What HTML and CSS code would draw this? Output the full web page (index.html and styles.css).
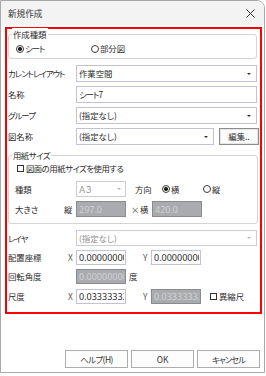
FILE: index.html
```html
<!DOCTYPE html>
<html lang="ja">
<head>
<meta charset="utf-8">
<link rel="stylesheet" href="styles.css">
</head>
<body>
<div class="window">
  <div class="titlebar">
    <span class="title">新規作成</span>
    <svg class="close" width="9" height="9" viewBox="0 0 9 9"><path d="M0.5 0.5L8.5 8.5M8.5 0.5L0.5 8.5" stroke="#333" stroke-width="1" fill="none"/></svg>
  </div>
  <div class="frame">
    <div class="group g1">
      <span class="legend">作成種類</span>
      <div class="radios">
        <span class="radio on r-sheet"><span class="kana">シート</span></span>
        <span class="radio">部分図</span>
      </div>
    </div>

    <div class="row r1">
      <span class="lbl kana">カレントレイアウト</span>
      <div class="field wide"><span class="val">作業空間</span><i class="arrow"></i></div>
    </div>
    <div class="row">
      <span class="lbl">名称</span>
      <div class="field wide"><span class="val kana">シート7</span></div>
    </div>
    <div class="row">
      <span class="lbl kana">グループ</span>
      <div class="field wide"><span class="val">(指定なし)</span><i class="arrow"></i></div>
    </div>
    <div class="row">
      <span class="lbl">図名称</span>
      <div class="field mid"><span class="val">(指定なし)</span><i class="arrow"></i></div>
      <div class="editbtn">編集..</div>
    </div>

    <div class="group g2">
      <span class="legend"><span class="kana-s">用紙サイズ</span></span>
      <div class="checkrow"><span class="check"></span><span class="kana-s">図面の用紙サイズを使用する</span></div>
      <div class="grow kind">
        <span class="glbl">種類</span>
        <div class="field small dsel"><span class="val">Ａ３</span><i class="arrow grey"></i></div>
        <span class="dir">方向</span>
        <span class="radio on r-yoko">横</span>
        <span class="radio">縦</span>
      </div>
      <div class="grow size">
        <span class="glbl2">大きさ</span>
        <span class="pre">縦</span>
        <div class="field small dis"><span class="val numv">297.0</span></div>
        <span class="times">×</span>
        <span class="pre2">横</span>
        <div class="field small dis"><span class="val numv">420.0</span></div>
      </div>
    </div>

    <div class="row layer">
      <span class="lbl kana">レイヤ</span>
      <div class="field wide dsel"><span class="val">(指定なし)</span><i class="arrow grey"></i></div>
    </div>
    <div class="row num">
      <span class="lbl nl">配置座標</span>
      <span class="ax">X</span>
      <div class="field small"><span class="val numv">0.00000000</span></div>
      <span class="ax ay">Y</span>
      <div class="field small"><span class="val numv">0.00000000</span></div>
    </div>
    <div class="row num">
      <span class="lbl nl">回転角度</span>
      <span class="ax"></span>
      <div class="field small dis"><span class="val numv">0.00000000</span></div>
      <span class="deg">度</span>
    </div>
    <div class="row num last">
      <span class="lbl nl">尺度</span>
      <span class="ax">X</span>
      <div class="field small"><span class="val numv">0.03333333</span></div>
      <span class="ax ay">Y</span>
      <div class="field small dis"><span class="val numv">0.03333333</span></div>
      <span class="checkrow inline"><span class="check"></span>異縮尺</span>
    </div>
  </div>

  <div class="buttons">
    <div class="btn kana-s">ヘルプ(H)</div>
    <div class="btn">OK</div>
    <div class="btn kana">キャンセル</div>
  </div>
</div>
</body>
</html>
```

FILE: styles.css
```css
* { box-sizing: border-box; }
body {
  margin: 0;
  background: #fff;
  font-family: "Noto Sans CJK JP", "Noto Sans", sans-serif;
  font-size: 8.4px;
  line-height: 11px;
  color: #2b2b2b;
  font-feature-settings: "palt";
}
.kana { letter-spacing: -1px; }
.kana-s { letter-spacing: -0.5px; }
.window {
  width: 265px;
  height: 373px;
  border: 1px solid #a9a9a9;
  border-top-right-radius: 8px;
  background: #fff;
  overflow: hidden;
  display: flex;
  flex-direction: column;
}
.titlebar {
  flex: none;
  height: 24px;
  background: #f3f3f3;
  display: flex;
  align-items: center;
  justify-content: space-between;
  padding: 0 9px 0 7px;
}
.title { color: #333; font-size: 8.6px; }
.close { display: block; }

.frame {
  flex: none;
  margin: 2px 0 0 4px;
  width: 257px;
  height: 287px;
  border: 2px solid #ff0000;
}

.group {
  position: relative;
  border: 1px solid #d4d4d4;
  border-radius: 3px;
}
.legend {
  position: absolute;
  top: -7px;
  left: 3px;
  padding: 0 1px;
  background: #fff;
  line-height: 12px;
}
.g1 {
  margin: 5px 0 0 1px;
  width: 249px;
  height: 25px;
}
.radios {
  display: flex;
  margin: 8px 0 0 7px;
  height: 11px;
}
.radio {
  display: inline-flex;
  align-items: center;
  gap: 1px;
  height: 11px;
}
.radio::before {
  content: "";
  width: 8px;
  height: 8px;
  border: 1px solid #3a3a3a;
  border-radius: 50%;
  box-sizing: border-box;
}
.radio.on::before {
  background: radial-gradient(circle, #222 0 1.8px, #fff 2.3px);
}
.r-sheet { width: 75px; }

.row {
  display: flex;
  align-items: center;
  height: 17px;
  margin-top: 4px;
  padding-left: 1px;
}
.row.r1 { margin-top: 6px; }
.lbl { width: 68px; flex: none; white-space: nowrap; }
.lbl.nl { width: 60px; }

.field {
  height: 100%;
  border: 1px solid #c2c2d6;
  background: #fff;
  padding: 0 2px;
  display: flex;
  align-items: center;
  overflow: hidden;
  white-space: nowrap;
  flex: none;
}
.field .val { flex: 1; overflow: hidden; color: #2b2b2b; }
.field .numv {
  font-family: "Noto Sans", "Liberation Sans", sans-serif;
  font-size: 9px;
  text-overflow: clip;
}
.wide { width: 181px; }
.mid { width: 138px; }
.small { width: 50px; padding: 0 1px 0 2px; }
.arrow {
  flex: none;
  width: 0;
  height: 0;
  border-left: 2px solid transparent;
  border-right: 2px solid transparent;
  border-top: 2px solid #333;
  margin-right: 3px;
}
.arrow.grey { border-top-color: #b8b8b8; }
.editbtn {
  margin-left: 5px;
  width: 40px;
  height: 17px;
  border: 1px solid #8c8c8c;
  box-shadow: inset 0 0 0 1px #e6e6e6;
  background: #fbfbfb;
  display: flex;
  align-items: center;
  justify-content: center;
}

.dsel { border-color: #cdcdcd; }
.dsel .val { color: #8e8e8e; }
.dis {
  background: #a9abae;
  border-color: #8b8b8b;
}
.field.dis .val { color: #d1d2d4; }

.g2 {
  margin: 10px 0 0 1px;
  width: 250px;
  height: 69px;
}
.checkrow {
  display: flex;
  align-items: center;
  gap: 2px;
  height: 11px;
  margin: 7px 0 0 8px;
}
.check {
  width: 7px;
  height: 7px;
  border: 1px solid #333;
  flex: none;
}
.grow {
  display: flex;
  align-items: center;
  height: 16px;
}
.kind { margin-top: 7px; }
.size { margin-top: 4px; }
.glbl { width: 61px; margin-left: 6px; flex: none; }
.glbl2 { width: 49px; margin-left: 6px; flex: none; }
.pre { width: 12px; flex: none; }
.dir { margin-left: 9px; width: 27px; flex: none; }
.r-yoko { width: 41px; }
.times { margin: 0 0 0 5px; width: 9px; color: #555; }
.pre2 { width: 12px; flex: none; }

.layer { margin-top: 6px; height: 16px; }
.num { height: 15px; margin-top: 4px; }
.num.last { margin-top: 5px; }
.ax { width: 8px; color: #555; flex: none; }
.ay { margin-left: 17px; }
.deg { margin-left: 3px; }
.checkrow.inline { margin: 0 0 0 9px; }

.buttons {
  display: flex;
  gap: 3px;
  margin: 36px 0 0 64px;
}
.btn {
  width: 63px;
  height: 18px;
  border: 1px solid #adadad;
  background: #fdfdfd;
  display: flex;
  align-items: center;
  justify-content: center;
  color: #333;
}
```
